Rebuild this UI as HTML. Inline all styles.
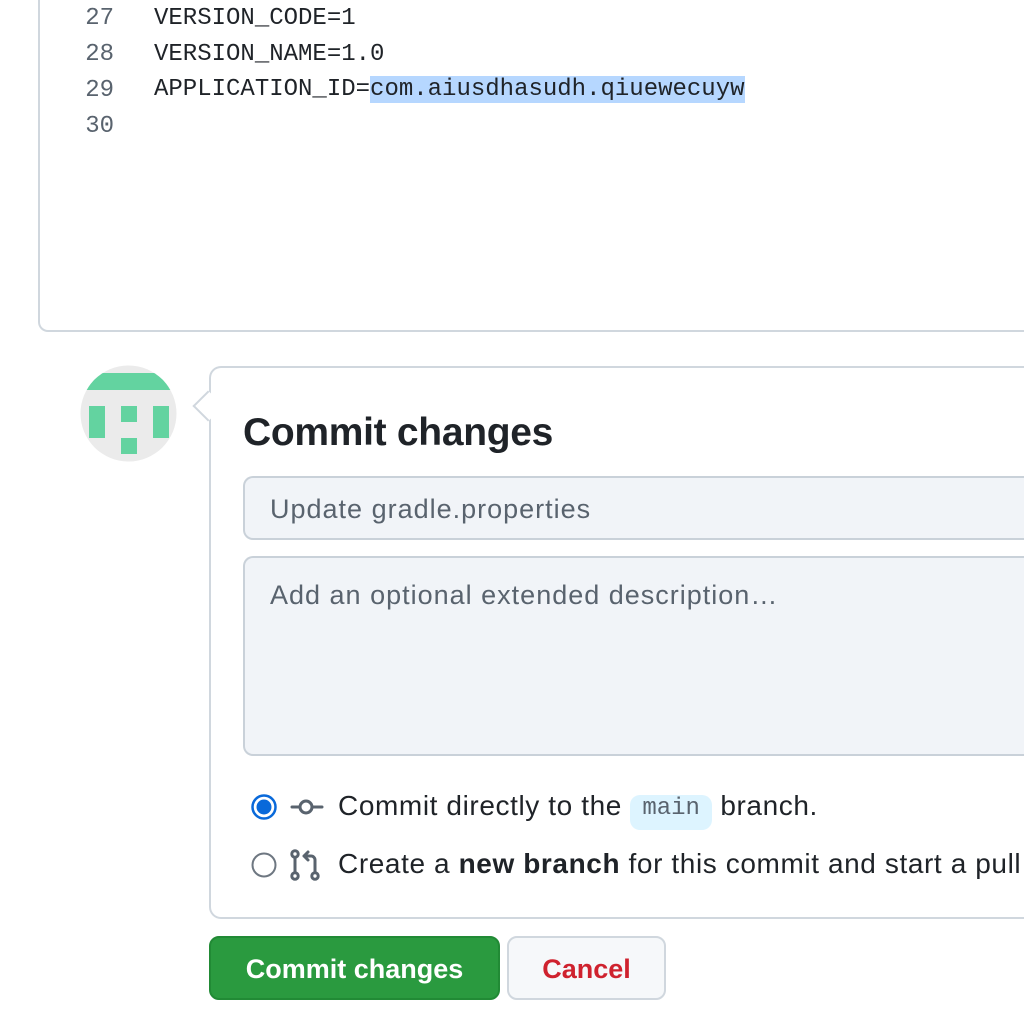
<!DOCTYPE html>
<html><head><meta charset="utf-8"><style>
*{box-sizing:border-box;margin:0;padding:0}
html,body{width:1024px;height:1020px;overflow:hidden}
body{background:#fff;position:relative;font-family:"Liberation Sans",sans-serif;color:#1f2328}
.code{position:absolute;left:38px;top:-20px;width:986px;height:352px;border-left:2px solid #d0d7de;border-bottom:2px solid #d0d7de;border-bottom-left-radius:10px}
.ln{position:absolute;left:60px;width:54px;text-align:right;font:24px "Liberation Mono",monospace;color:#59636e}
.lc{position:absolute;left:154px;font:24px "Liberation Mono",monospace;color:#1f2328;white-space:pre}
.hl{background:#b6d7ff}
.panel{position:absolute;left:209px;top:366px;width:815px;height:553px;border:2px solid #d0d7de;border-right:none;border-radius:12px 0 0 12px;background:#fff}
.arrow{position:absolute;left:197px;top:395px;width:22px;height:22px;background:#fff;border-left:2px solid #d0d7de;border-bottom:2px solid #d0d7de;transform:rotate(45deg)}
h2{position:absolute;left:243px;top:411px;font-size:39px;font-weight:bold;letter-spacing:-0.3px}
.inp{position:absolute;left:243px;width:781px;background:#f1f4f8;border:2px solid #c9d1d9;border-right:none;border-radius:10px 0 0 10px;font-size:27px;letter-spacing:1px;color:#59636e;padding-left:25px}
.opt{position:absolute;left:338px;width:686px;overflow:hidden;font-size:28px;letter-spacing:0.6px;white-space:nowrap}
.btn{position:absolute;top:936px;height:64px;border-radius:10px;font-size:27px;text-align:center;line-height:62px;font-weight:bold}
</style></head><body>
<div class="code"></div>
<div class="ln" style="top:5px">27</div><div class="lc" style="top:5px">VERSION_CODE=1</div>
<div class="ln" style="top:41px">28</div><div class="lc" style="top:41px">VERSION_NAME=1.0</div>
<div class="ln" style="top:77px">29</div><div class="lc" style="top:72px;line-height:36px">APPLICATION_ID=<span class="hl">com.aiusdhasudh.qiuewecuyw</span></div>
<div class="ln" style="top:113px">30</div>

<svg style="position:absolute;left:80px;top:365px" width="97" height="97" viewBox="0 0 97 97">
<defs><clipPath id="c"><circle cx="48.5" cy="48.5" r="48"/></clipPath></defs>
<circle cx="48.5" cy="48.5" r="48" fill="#ebebeb"/>
<g clip-path="url(#c)" fill="#63d3a0">
<rect x="0" y="8" width="97" height="17"/>
<rect x="9" y="41" width="16" height="32"/>
<rect x="41" y="41" width="16" height="16"/>
<rect x="41" y="73" width="16" height="16"/>
<rect x="73" y="41" width="16" height="32"/>
</g></svg>

<div class="panel"></div>
<div class="arrow"></div>
<h2>Commit changes</h2>
<div class="inp" style="top:476px;height:64px;line-height:62px">Update gradle.properties</div>
<div class="inp" style="top:556px;height:200px;padding-top:22px">Add an optional extended description…</div>

<svg style="position:absolute;left:250px;top:793px" width="28" height="28"><circle cx="14" cy="14" r="11.5" fill="#fff" stroke="#0969da" stroke-width="2.5"/><circle cx="14" cy="14" r="7.5" fill="#0969da"/></svg>
<svg style="position:absolute;left:250px;top:851px" width="28" height="28"><circle cx="14" cy="14" r="11.5" fill="#fff" stroke="#6e7781" stroke-width="2"/></svg>
<svg style="position:absolute;left:290px;top:793px" width="34" height="28" fill="none" stroke="#59636e" stroke-width="3" stroke-linecap="round"><circle cx="16" cy="14" r="6"/><path d="M2 14h8M22 14h10"/></svg>
<svg style="position:absolute;left:290px;top:848px" width="34" height="34" fill="none" stroke="#59636e" stroke-width="3" stroke-linecap="round" stroke-linejoin="round"><circle cx="5" cy="6" r="3.2"/><circle cx="5" cy="28" r="3.2"/><path d="M5 9.5v15"/><circle cx="25" cy="28" r="3.2"/><path d="M25 24.5V12a4 4 0 0 0-4-4h-7M18 4l-4 4 4 4"/></svg>

<div class="opt" style="top:790px">Commit directly to the <span style="display:inline-block;background:#ddf4ff;border-radius:10px;padding:0 12px;height:35px;line-height:35px;font:24px 'Liberation Mono',monospace;letter-spacing:0;color:#59636e;vertical-align:1px">main</span> branch.</div>
<div class="opt" style="top:848px">Create a <b>new branch</b> for this commit and start a pull request</div>

<div class="btn" style="left:209px;width:291px;background:#2a9a3f;border:2px solid #218a35;color:#fff">Commit changes</div>
<div class="btn" style="left:507px;width:159px;background:#f6f8fa;border:2px solid #d0d7de;color:#cf222e">Cancel</div>
</body></html>
